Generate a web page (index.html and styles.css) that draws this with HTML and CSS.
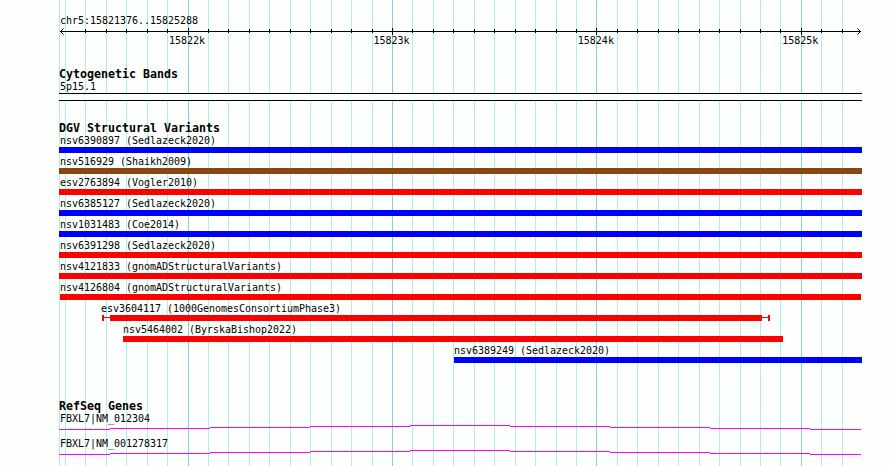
FILE: index.html
```html
<!DOCTYPE html>
<html lang="en">
<head>
  <meta charset="UTF-8">
  <title>chr5:15821376..15825288</title>
  <link rel="stylesheet" href="styles.css">
</head>
<body>
  <div class="browser">
    <!-- grid lines: minor every 100 bp, major every 1 kb -->
    <svg class="grid" width="890" height="466" shape-rendering="crispEdges">
      <path class="minor" d="M59.5 0v466M65.5 0v466M85.5 0v466M106.5 0v466M126.5 0v466M147.5 0v466M167.5 0v466M208.5 0v466M228.5 0v466M249.5 0v466M269.5 0v466M290.5 0v466M310.5 0v466M331.5 0v466M351.5 0v466M372.5 0v466M412.5 0v466M433.5 0v466M453.5 0v466M474.5 0v466M494.5 0v466M515.5 0v466M535.5 0v466M556.5 0v466M576.5 0v466M617.5 0v466M637.5 0v466M658.5 0v466M678.5 0v466M699.5 0v466M719.5 0v466M740.5 0v466M760.5 0v466M780.5 0v466M821.5 0v466M842.5 0v466"/>
      <path class="major" d="M188.5 0v466M392.5 0v466M596.5 0v466M801.5 0v466"/>
    </svg>

    <div class="tracks">
      <div class="ruler">
        <div class="label">chr5:15821376..15825288</div>
        <svg class="axis" width="803" height="7" shape-rendering="crispEdges">
          <path d="M1 3.5H802M26.5 1v4M47.5 1v4M67.5 1v4M88.5 1v4M108.5 1v4M129.5 0v7M149.5 1v4M169.5 1v4M190.5 1v4M210.5 1v4M231.5 1v4M251.5 1v4M272.5 1v4M292.5 1v4M313.5 1v4M333.5 0v7M353.5 1v4M374.5 1v4M394.5 1v4M415.5 1v4M435.5 1v4M456.5 1v4M476.5 1v4M497.5 1v4M517.5 1v4M537.5 0v7M558.5 1v4M578.5 1v4M599.5 1v4M619.5 1v4M640.5 1v4M660.5 1v4M681.5 1v4M701.5 1v4M721.5 1v4M742.5 0v7M762.5 1v4M783.5 1v4"/>
          <path class="arrow" d="M4.5 .5L1.5 3.5L4.5 6.5M798.5 .5L801.5 3.5L798.5 6.5"/>
        </svg>
        <div class="scale">
          <span>15822k</span><span>15823k</span><span>15824k</span><span>15825k</span>
        </div>
      </div>

      <div class="track cyto">
        <h2>Cytogenetic Bands</h2>
        <div class="label">5p15.1</div>
        <div class="band"></div>
      </div>

      <div class="track variants">
        <h2>DGV Structural Variants</h2>
        <div class="row"><div class="label">nsv6390897 (Sedlazeck2020)</div><div class="bar blue"></div></div>
        <div class="row"><div class="label">nsv516929 (Shaikh2009)</div><div class="bar brown"></div></div>
        <div class="row"><div class="label">esv2763894 (Vogler2010)</div><div class="bar red"></div></div>
        <div class="row"><div class="label">nsv6385127 (Sedlazeck2020)</div><div class="bar blue"></div></div>
        <div class="row"><div class="label">nsv1031483 (Coe2014)</div><div class="bar blue"></div></div>
        <div class="row"><div class="label">nsv6391298 (Sedlazeck2020)</div><div class="bar red"></div></div>
        <div class="row"><div class="label">nsv4121833 (gnomADStructuralVariants)</div><div class="bar red"></div></div>
        <div class="row"><div class="label">nsv4126804 (gnomADStructuralVariants)</div><div class="bar red inset"></div></div>
        <div class="row esv3604117">
          <div class="label">esv3604117 (1000GenomesConsortiumPhase3)</div>
          <div class="range"><i class="cap"></i><i class="line"></i><div class="bar red"></div><i class="line"></i><i class="cap"></i></div>
        </div>
        <div class="row nsv5464002"><div class="label">nsv5464002 (ByrskaBishop2022)</div><div class="bar red"></div></div>
        <div class="row nsv6389249"><div class="label">nsv6389249 (Sedlazeck2020)</div><div class="bar blue"></div></div>
      </div>

      <div class="track genes">
        <h2>RefSeq Genes</h2>
        <div class="gene">
          <div class="label">FBXL7|NM_012304</div>
          <svg class="intron" width="803" height="5" shape-rendering="crispEdges">
            <path d="M0 4.5H51M51 3.5H151M151 2.5H251M251 1.5H351M351 .5H451M451 1.5H551M551 2.5H651M651 3.5H751M751 4.5H802"/>
          </svg>
        </div>
        <div class="gene">
          <div class="label">FBXL7|NM_001278317</div>
          <svg class="intron" width="803" height="5" shape-rendering="crispEdges">
            <path d="M0 4.5H51M51 3.5H151M151 2.5H251M251 1.5H351M351 .5H451M451 1.5H551M551 2.5H651M651 3.5H751M751 4.5H802"/>
          </svg>
        </div>
      </div>
    </div>
  </div>
</body>
</html>
```
FILE: styles.css
```css
body {
  margin: 0;
  background: #fdfffc;
  color: #000;
  font: 10px/12px "DejaVu Sans Mono", monospace;
}
.browser {
  position: relative;
  width: 890px;
  height: 466px;
  overflow: hidden;
}
.grid {
  position: absolute;
  top: 0;
  left: 0;
}
.minor {
  stroke: #afeeee;
}
.major {
  stroke: #87ceeb;
}
.tracks {
  position: relative;
  width: 803px;
  padding: 15px 0 0 59px;
}
svg {
  display: block;
}
.label {
  height: 12px;
  padding-left: 1px;
  letter-spacing: -0.02px;
  white-space: nowrap;
}
h2 {
  height: 13px;
  margin: 0;
  font-size: 11.63px;
  line-height: 13px;
}

/* ruler */
.ruler {
  height: 53px;
}
.axis {
  margin-top: 1px;
  stroke: #000;
  fill: none;
}
.arrow {
  shape-rendering: auto;
}
.scale {
  display: flex;
  gap: 168.4px;
  padding-left: 110px;
}
.scale span {
  width: 36px;
}

/* tracks */
.cyto {
  height: 54px;
}
.band {
  height: 6px;
  border-top: 1px solid #000;
  border-bottom: 1px solid #000;
  background: #fdfffc;
}
.variants {
  height: 278px;
}
.row {
  height: 21px;
}
.bar {
  height: 6px;
}
.red {
  background: #f00;
}
.blue {
  background: #00f;
}
.brown {
  background: #8b4513;
}
.inset {
  margin: 0 1px;
}
.range {
  display: flex;
  align-items: flex-start;
}
.range .bar {
  flex: 1;
}
.cap {
  width: 2px;
  height: 6px;
  background: #f00;
}
.line {
  width: 6px;
  height: 1px;
  margin-top: 2px;
  background: #f00;
}
.esv3604117 {
  width: 668px;
  margin-left: 43px;
}
.esv3604117 .label {
  padding-left: 0;
  margin-left: -1px;
}
.nsv5464002 {
  width: 660px;
  margin-left: 64px;
}
.nsv6389249 {
  width: 408px;
  margin-left: 395px;
}
.nsv5464002 .label,
.nsv6389249 .label {
  padding-left: 0;
}

/* genes */
.gene {
  height: 25px;
}
.intron {
  fill: none;
  stroke: #f0f;
}
```
